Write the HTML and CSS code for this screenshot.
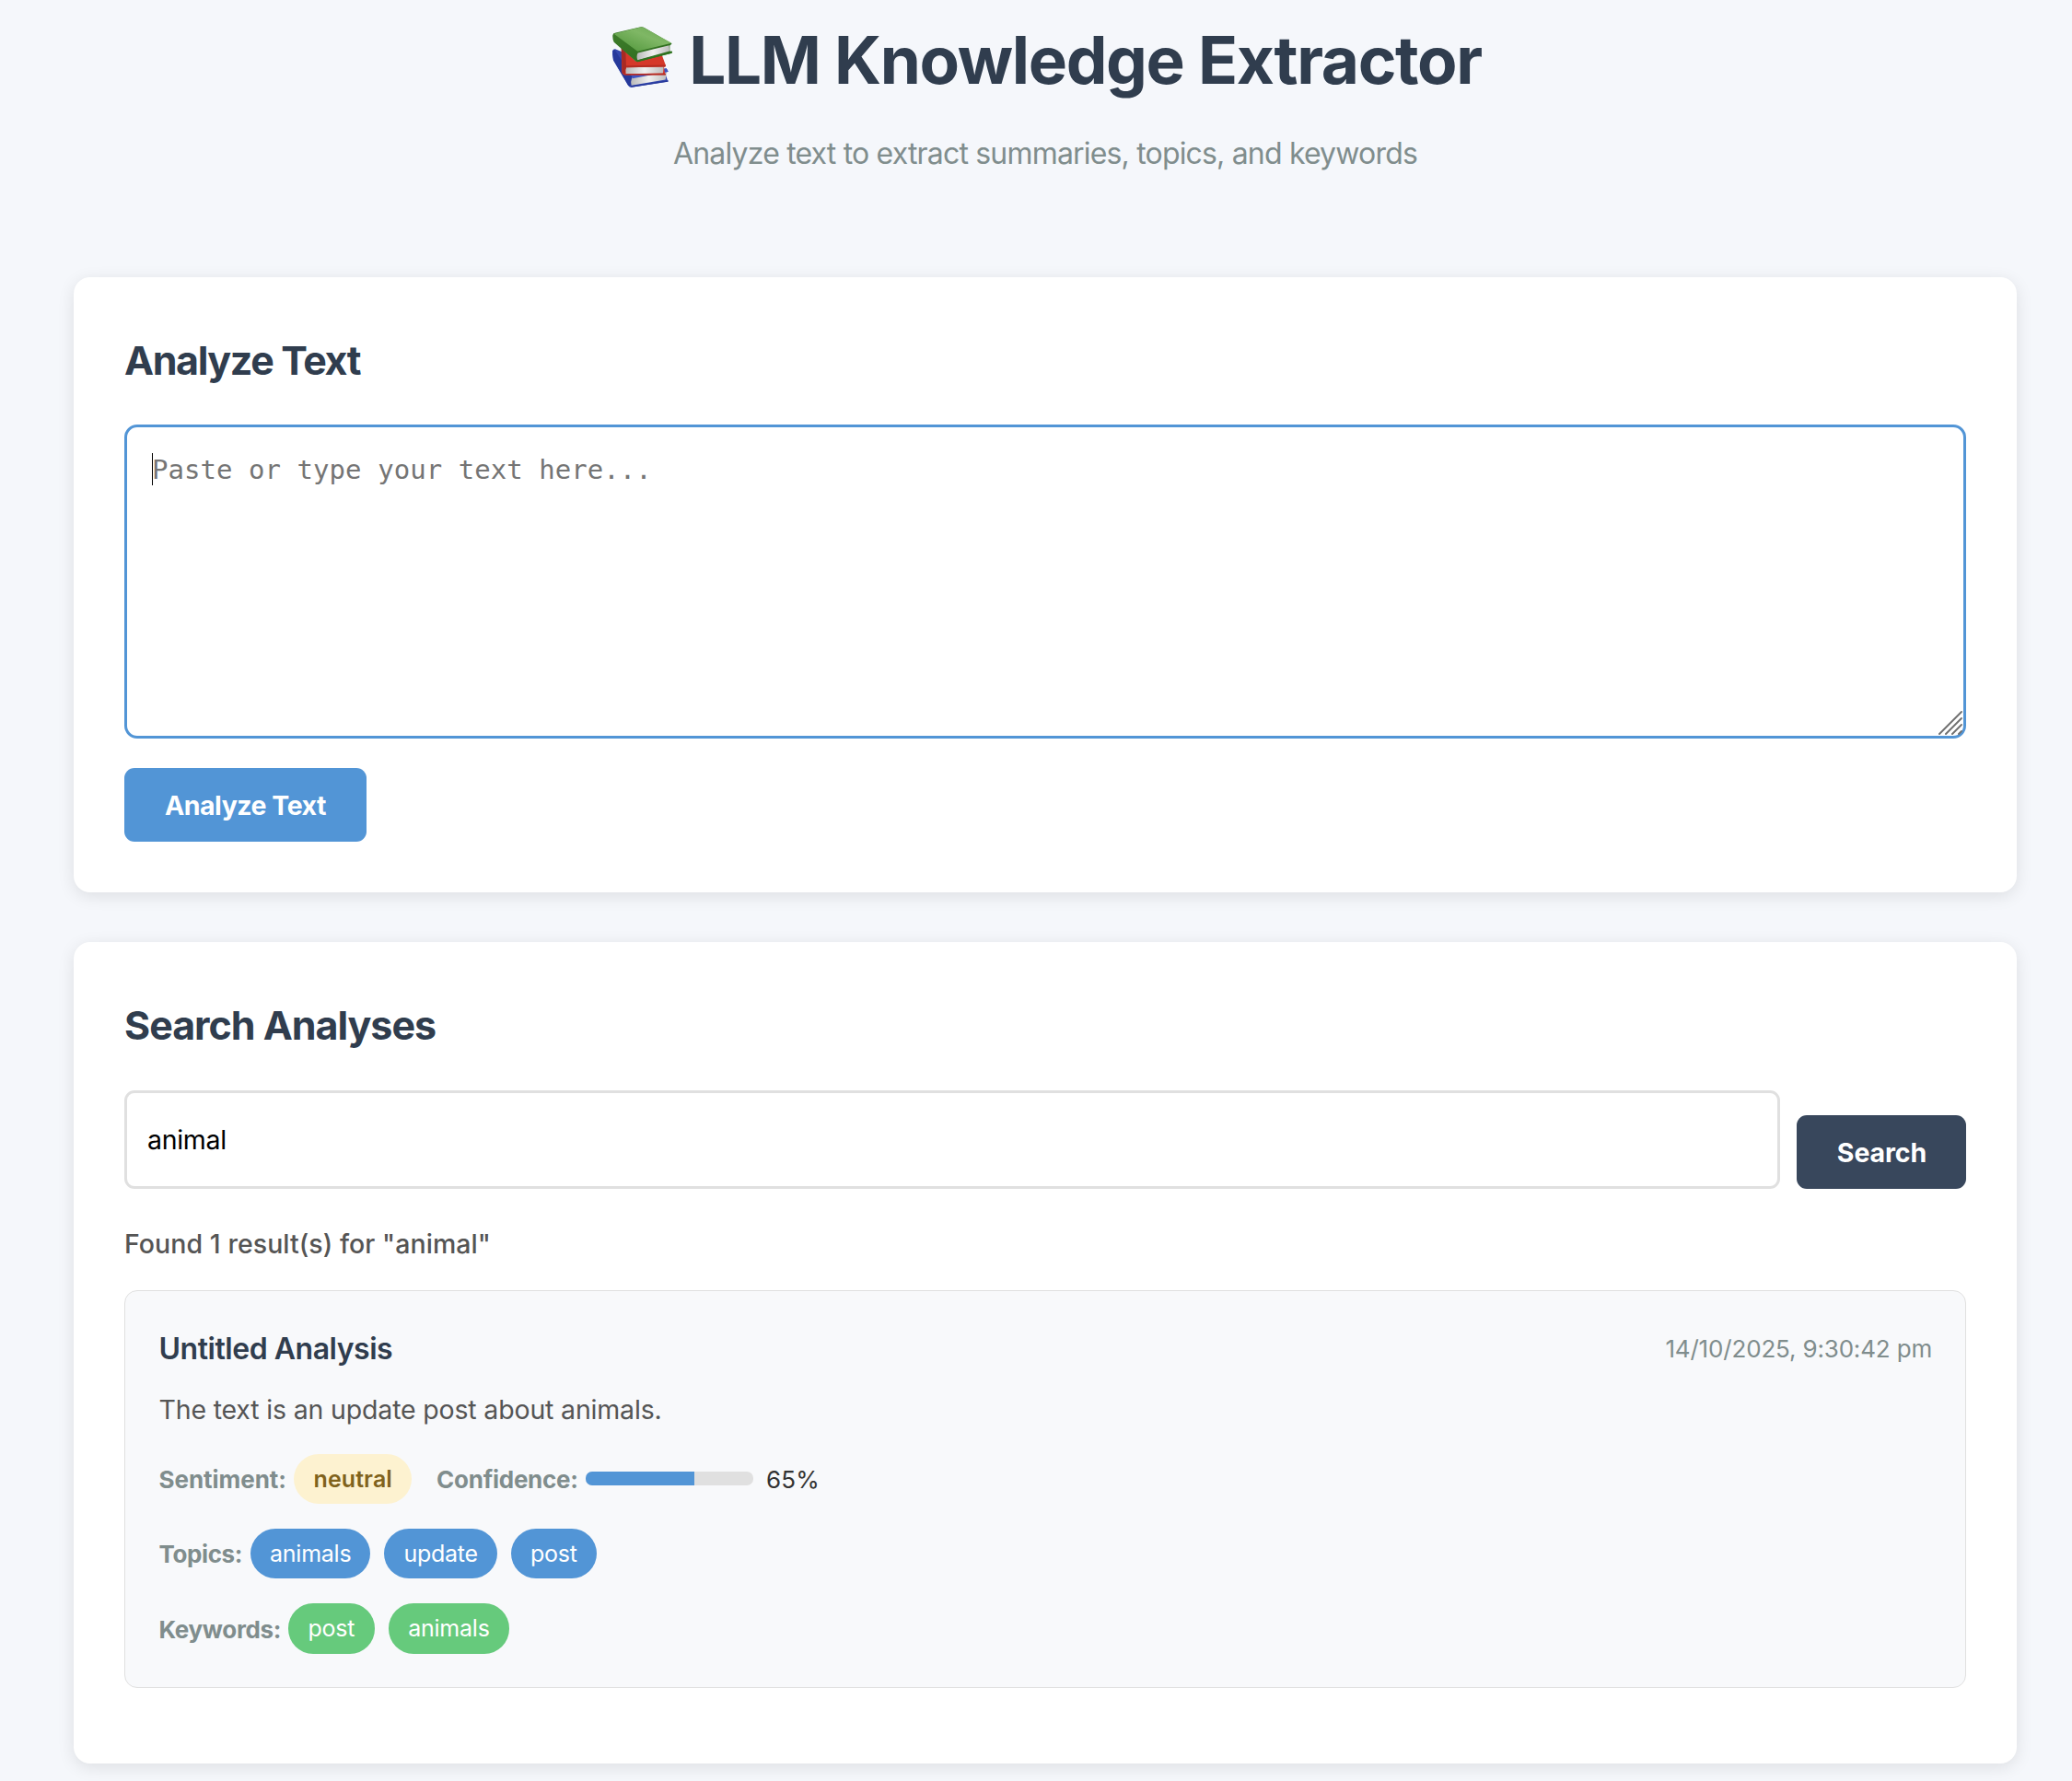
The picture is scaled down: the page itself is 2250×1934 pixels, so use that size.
FILE: index.html
```
<!DOCTYPE html>
<html lang="en">
<head>
<meta charset="utf-8">
<title>LLM Knowledge Extractor</title>
<link rel="stylesheet" href="styles.css">
</head>
<body>
<div class="container">
  <header class="header">
    <h1 class="title">
      <svg class="title-icon" viewBox="29 25 195 197" aria-hidden="true">
        <defs>
          <linearGradient id="green" x1="0" y1="1" x2="1" y2="0"><stop offset="0" stop-color="#4b9236"/><stop offset=".6" stop-color="#7fb765"/><stop offset="1" stop-color="#68a650"/></linearGradient>
          <linearGradient id="spine" x1="0" y1="0" x2="1" y2="1"><stop offset="0" stop-color="#3f7d2c"/><stop offset="1" stop-color="#2c6b1c"/></linearGradient>
          <linearGradient id="pages" x1="0" y1="0" x2="1" y2="0"><stop offset="0" stop-color="#b9b9b9"/><stop offset=".5" stop-color="#f0f0f0"/><stop offset="1" stop-color="#bdbdbd"/></linearGradient>
        </defs>
        <path d="M29 103 Q31 97 38 97 L64 108 L90 182 L205 160 L211 170 L201 176 L208 197 L211 203 L92 222 Q84 223 80 216 L32 134 Q28 118 29 103Z" fill="#3347ad"/>
        <path d="M31 104 L36 99 L92 186 L88 219 L80 214 L33 134Z" fill="#26399a"/>
        <path d="M93 190 L206 172 L202 197 L91 216 Q87 204 93 190Z" fill="url(#pages)"/>
        <path d="M92 181 L205 160 L211 171 L94 193Z" fill="#3f55c3"/>
        <path d="M90 217 L211 199 L210 204 L91 222Z" fill="#27399c"/>
        <path d="M58 92 L104 136 L190 116 L203 151 L197 157 L200 176 L203 181 L68 182 Q62 181 60 174 Z" fill="#d5382a"/>
        <path d="M58 92 L72 105 L74 156 L69 181 L61 174Z" fill="#a72a24"/>
        <path d="M75 157 L196 155 L194 176 L73 178 Q70 165 75 157Z" fill="url(#pages)"/>
        <path d="M72 151 L203 149 L202 155 L76 157Z" fill="#b52c22"/>
        <path d="M68 178 L203 177 L202 182 L70 182Z" fill="#b32a22"/>
        <path d="M30 52 Q31 45 40 44 L118 26 Q127 24 134 28 L223 80 L216 86 L216 104 L224 105 L223 111 L110 139 Q103 137 98 131 L34 75 Q29 65 30 52Z" fill="url(#spine)"/>
        <path d="M34 48 L121 26 Q127 25 133 28 L222 78 L111 105Z" fill="url(#green)"/>
        <path d="M112 110 L214 85 L215 104 L111 133 Q106 121 112 110Z" fill="url(#pages)"/>
        <path d="M110 134 L224 105 L222 111 L110 139Z" fill="#2f7420"/>
      </svg>
      <span>LLM Knowledge Extractor</span>
    </h1>
    <p class="subtitle">Analyze text to extract summaries, topics, and keywords</p>
  </header>

  <section class="card">
    <h2 class="card-title card-title-analyze">Analyze Text</h2>
    <div class="editor">
      <textarea class="textarea" placeholder="Paste or type your text here..."></textarea>
      <span class="caret"></span>
      <svg class="grip" viewBox="0 0 26 26" aria-hidden="true"><path d="M1 25 25 1M8 25 25 8M15 25 25 15M22 25 25 22"/></svg>
    </div>
    <button class="btn btn-primary">Analyze Text</button>
  </section>

  <section class="card">
    <h2 class="card-title card-title-search">Search Analyses</h2>
    <div class="search-row">
      <input class="search-input" type="text" value="animal">
      <button class="btn btn-secondary">Search</button>
    </div>
    <p class="found">Found 1 result(s) for "animal"</p>
    <article class="result">
      <div class="result-head">
        <h3 class="result-title">Untitled Analysis</h3>
        <time class="result-date">14/10/2025, 9:30:42 pm</time>
      </div>
      <p class="summary">The text is an update post about animals.</p>
      <div class="meta meta-first">
        <span class="label label-sentiment">Sentiment:</span>
        <span class="pill neutral">neutral</span>
        <span class="label label-confidence">Confidence:</span>
        <span class="bar"><span class="bar-fill" style="width: 65%"></span></span>
        <span class="percent">65%</span>
      </div>
      <div class="meta">
        <span class="label label-topics">Topics:</span>
        <span class="pills"><span class="pill topic">animals</span><span class="pill topic">update</span><span class="pill topic">post</span></span>
      </div>
      <div class="meta meta-last">
        <span class="label label-keywords">Keywords:</span>
        <span class="pills"><span class="pill keyword">post</span><span class="pill keyword">animals</span></span>
      </div>
    </article>
  </section>
</div>
</body>
</html>
```
FILE: styles.css
```
* { box-sizing: border-box; margin: 0; padding: 0; }

body {
  background: #f5f7fb;
  color: #333;
  font-family: Inter, "Liberation Sans", sans-serif;
  height: 1934px;
  overflow: hidden;
}

.container { padding: 0 60px 0 80px; }

.header {
  height: 301px;
  padding-top: 15px;
  text-align: center;
}

.title {
  display: flex;
  justify-content: center;
  align-items: flex-start;
  gap: 18px;
  padding-left: 4px;
  color: #303d4e;
  font-size: 71px;
  font-weight: 700;
  line-height: 100px;
  letter-spacing: -1.355px;
  white-space: nowrap;
}

.title-icon { width: 65px; height: 66px; margin-top: 14px; flex: none; }

.subtitle {
  margin-top: 26px;
  color: #808d8d;
  font-size: 32px;
  line-height: 52px;
  letter-spacing: -0.82px;
}

.card {
  background: #fff;
  border-radius: 18px;
  padding: 55px;
  box-shadow: 0 4px 18px rgba(0, 0, 0, 0.1);
}
.card + .card { margin-top: 54px; }

.card-title {
  color: #303d4e;
  font-size: 43px;
  font-weight: 700;
  line-height: 70px;
}
.card-title-analyze { letter-spacing: -1.394px; }
.card-title-search { letter-spacing: -1.028px; }

.editor { position: relative; margin-top: 35px; height: 341px; }

.textarea {
  display: block;
  width: 100%;
  height: 100%;
  padding: 23px 27px;
  border: 3px solid #5295d6;
  border-radius: 14px;
  background: #fff;
  outline: none;
  resize: none;
  font-family: "DejaVu Sans Mono", monospace;
  font-size: 29px;
  line-height: 46px;
  letter-spacing: 0.05px;
}
.textarea::placeholder { color: #757575; opacity: 1; }

.caret {
  position: absolute;
  left: 30px;
  top: 31px;
  width: 1px;
  height: 35px;
  background: #000;
}

.grip {
  position: absolute;
  right: 4px;
  bottom: 4px;
  width: 26px;
  height: 26px;
  fill: none;
  stroke: #707070;
  stroke-width: 1.9;
  stroke-linecap: round;
}

.btn {
  display: block;
  flex: none;
  height: 80px;
  border: 0;
  border-radius: 11px;
  color: #fff;
  font-family: inherit;
  font-size: 28.5px;
  font-weight: 650;
  white-space: nowrap;
}
.btn-primary {
  width: 263px;
  margin-top: 32px;
  background: #5295d6;
  letter-spacing: -0.48px;
}
.btn-secondary {
  width: 184px;
  padding-left: 1px;
  background: #38475c;
  letter-spacing: -0.1px;
}

.search-row {
  display: flex;
  align-items: flex-end;
  gap: 18px;
  margin-top: 36px;
}

.search-input {
  flex: 1;
  min-width: 0;
  height: 107px;
  padding: 0 22px;
  border: 3px solid #e0e0e0;
  border-radius: 11px;
  background: #fff;
  color: #000;
  font-family: inherit;
  font-size: 28.5px;
  letter-spacing: -0.3px;
}

.found {
  margin-top: 37px;
  color: #555;
  font-size: 28.5px;
  font-weight: 500;
  line-height: 46px;
  letter-spacing: 0.06px;
}

.result {
  height: 432px;
  margin: 27px 0;
  padding: 37px 36px 36px 36.5px;
  background: #f8f9fb;
  border: 1px solid #e0e0e0;
  border-radius: 14px;
}

.result-head {
  display: flex;
  justify-content: space-between;
  line-height: 52px;
}

.result-title {
  color: #303d4e;
  font-size: 32px;
  font-weight: 600;
  letter-spacing: -0.471px;
}

.result-date {
  color: #808d8d;
  font-size: 26px;
  letter-spacing: -0.17px;
}

.summary {
  margin-top: 17px;
  color: #555;
  font-size: 28.5px;
  line-height: 46px;
  letter-spacing: -0.173px;
}

.meta {
  display: flex;
  align-items: center;
  height: 54px;
  margin-top: 27px;
  font-size: 26px;
  line-height: 52px;
}
.meta-first { margin-top: 25px; }
.meta-last { height: 55px; }

.label, .percent { padding-top: 2px; }
.label { color: #808d8d; font-weight: 650; }
.label-sentiment { width: 146.5px; letter-spacing: -0.05px; }
.label-confidence { width: 161.5px; margin-left: 27.5px; letter-spacing: -0.25px; }
.label-topics { width: 99.5px; letter-spacing: -0.38px; }
.label-keywords { width: 140.5px; letter-spacing: -0.33px; }

.pills { display: flex; gap: 15px; }

.pill {
  height: 54px;
  padding: 0 21.5px;
  border-radius: 27px;
  color: #fff;
  font-size: 25px;
  line-height: 54px;
  letter-spacing: -0.24px;
}
.meta-last .pill { height: 55px; }
.neutral {
  padding: 0 20.5px 0 21.5px;
  background: #fdf2d0;
  color: #80621c;
  font-weight: 600;
  letter-spacing: 0.1px;
}
.topic { padding: 0 21px; background: #5295d6; }
.keyword { background: #66ca7c; }

.bar {
  width: 182px;
  height: 15px;
  margin-bottom: 1px;
  border-radius: 7px;
  background: #e0e0e0;
  overflow: hidden;
}
.bar-fill { display: block; height: 100%; background: #5295d6; }

.percent { margin-left: 14.5px; color: #333; letter-spacing: 0.1px; }
```
